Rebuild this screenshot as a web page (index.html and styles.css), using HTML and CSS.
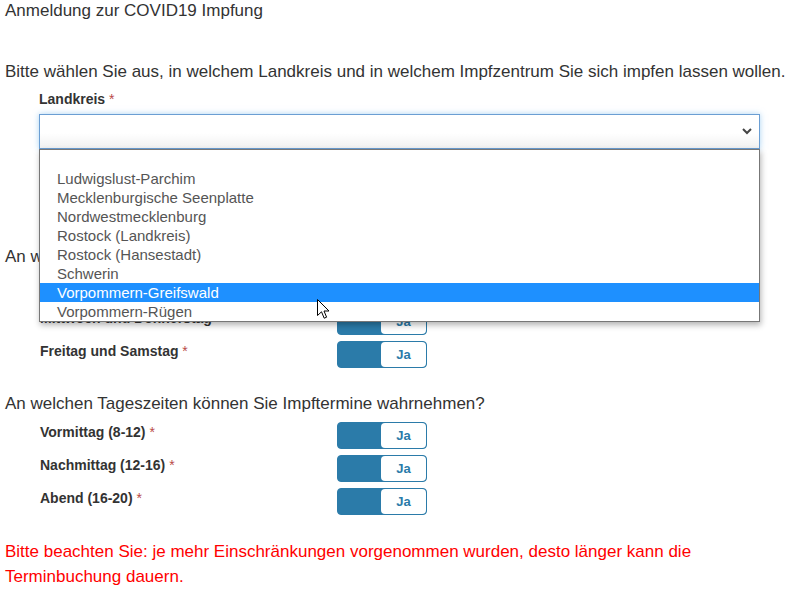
FILE: index.html
```html
<!DOCTYPE html>
<html lang="de">
<head>
    <meta charset="UTF-8">
    <title>Anmeldung zur COVID19 Impfung</title>
    <link rel="stylesheet" href="styles.css">
</head>
<body>
<div class="page">
    <h1 class="title">Anmeldung zur COVID19 Impfung</h1>

    <p class="intro">Bitte wählen Sie aus, in welchem Landkreis und in welchem Impfzentrum Sie sich impfen lassen wollen.</p>

    <div class="field">
        <label class="field-label">Landkreis <span class="req">*</span></label>
        <div class="select-wrap">
            <div class="select">
                <svg class="chevron" width="10" height="7" viewBox="0 0 10 7">
                    <polyline points="1,1 5,5 9,1" fill="none" stroke="#444" stroke-width="2"/>
                </svg>
            </div>
            <ul class="dropdown">
                <li>&nbsp;</li>
                <li>Ludwigslust-Parchim</li>
                <li>Mecklenburgische Seenplatte</li>
                <li>Nordwestmecklenburg</li>
                <li>Rostock (Landkreis)</li>
                <li>Rostock (Hansestadt)</li>
                <li>Schwerin</li>
                <li class="active">Vorpommern-Greifswald</li>
                <li>Vorpommern-Rügen</li>
            </ul>
            <svg class="cursor" width="13" height="21" viewBox="0 0 13 21">
                <path d="M0.5 0.5 L0.5 16.5 L4.5 12.8 L7.2 19.2 L9.6 18.2 L7 12 L12 12 Z" fill="#fff" stroke="#000" stroke-width="1"/>
            </svg>
        </div>
    </div>

    <p class="question q-days">An welchen Wochentagen können Sie Impftermine wahrnehmen?</p>
    <div class="rows">
        <div class="row">
            <span class="row-label">Montag und Dienstag <span class="req">*</span></span>
            <div class="toggle"><span class="toggle-knob">Ja</span></div>
        </div>
        <div class="row">
            <span class="row-label">Mittwoch und Donnerstag <span class="req">*</span></span>
            <div class="toggle"><span class="toggle-knob">Ja</span></div>
        </div>
        <div class="row">
            <span class="row-label">Freitag und Samstag <span class="req">*</span></span>
            <div class="toggle"><span class="toggle-knob">Ja</span></div>
        </div>
    </div>

    <p class="question q-times">An welchen Tageszeiten können Sie Impftermine wahrnehmen?</p>
    <div class="rows">
        <div class="row">
            <span class="row-label">Vormittag (8-12) <span class="req">*</span></span>
            <div class="toggle"><span class="toggle-knob">Ja</span></div>
        </div>
        <div class="row">
            <span class="row-label">Nachmittag (12-16) <span class="req">*</span></span>
            <div class="toggle"><span class="toggle-knob">Ja</span></div>
        </div>
        <div class="row">
            <span class="row-label">Abend (16-20) <span class="req">*</span></span>
            <div class="toggle"><span class="toggle-knob">Ja</span></div>
        </div>
    </div>

    <p class="note">Bitte beachten Sie: je mehr Einschränkungen vorgenommen wurden, desto länger kann die Terminbuchung dauern.</p>
</div>
</body>
</html>
```

FILE: styles.css
```css
body {
    background-color: #fff;
    margin: 0;
    padding: 0;
    font-family: "Liberation Sans", Arial, sans-serif;
    color: #333;
}
.page {
    padding: 0 5px;
}
.title {
    margin: 0;
    font-size: 17px;
    font-weight: 400;
    line-height: 22px;
}
.intro {
    margin: 39px 0 0;
    font-size: 17px;
    line-height: 22px;
}
.field {
    padding-left: 34px;
    margin-top: 7px;
}
.field-label {
    display: block;
    font-size: 14px;
    font-weight: 700;
    line-height: 18px;
    margin-bottom: 6px;
}
.req {
    color: #b94a48;
    font-weight: 400;
}
.select-wrap {
    position: relative;
    width: 721px;
}
.select {
    box-sizing: border-box;
    height: 35px;
    border: 1px solid #6b9ed3;
    background: linear-gradient(#fff 55%, #f1f1f1);
    box-shadow: 0 0 6px rgba(102, 175, 233, .55);
    display: flex;
    align-items: center;
    justify-content: flex-end;
    padding-right: 7px;
}
.dropdown {
    position: absolute;
    top: 35px;
    left: 0;
    right: 0;
    margin: 0;
    padding: 0;
    list-style: none;
    background: #fff;
    border: 1px solid #777;
    box-shadow: 1px 3px 6px rgba(0, 0, 0, .3);
    z-index: 2;
}
.dropdown li {
    height: 19px;
    line-height: 19px;
    padding-left: 17px;
    font-size: 15px;
    color: #555;
}
.dropdown li.active {
    background-color: #1e90ff;
    color: #fff;
}
.cursor {
    position: absolute;
    left: 278px;
    top: 185px;
    z-index: 3;
}
.question {
    margin: 0 0 7px;
    font-size: 17px;
    line-height: 22px;
}
.q-days {
    margin-top: 97px;
}
.q-times {
    margin-top: 25px;
}
.rows {
    display: flex;
    flex-direction: column;
    gap: 6px;
    padding-left: 35px;
}
.row {
    display: flex;
    align-items: flex-start;
}
.row-label {
    width: 297px;
    padding-top: 1px;
    font-size: 14px;
    font-weight: 700;
    line-height: 18px;
}
.toggle {
    box-sizing: border-box;
    display: flex;
    width: 90px;
    height: 27px;
    border: 1px solid #2b7ba9;
    border-radius: 4px;
    background-color: #2b7ba9;
}
.toggle-knob {
    margin-left: auto;
    width: 45px;
    background: #fff;
    border-radius: 4px;
    display: flex;
    align-items: center;
    justify-content: center;
    font-size: 13px;
    font-weight: 700;
    color: #2b7ba9;
}
.note {
    margin: 24px 0 0;
    font-size: 17px;
    line-height: 25px;
    color: #f00;
}
```
